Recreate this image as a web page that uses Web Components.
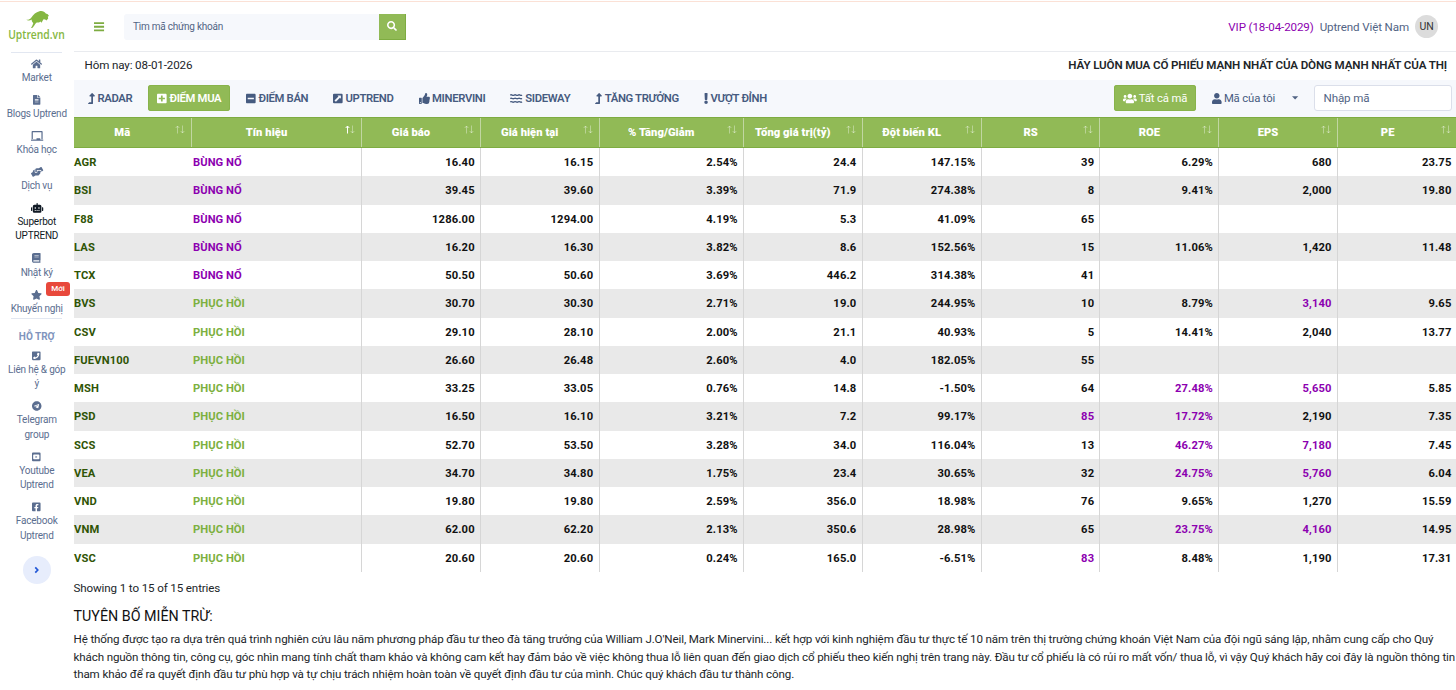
<!DOCTYPE html>
<html lang="vi">
<head>
<meta charset="utf-8">
<title>Uptrend.vn</title>
<style>
  * { box-sizing: border-box; }
  html, body { margin: 0; height: 690px; overflow: hidden; }
  body {
    font-family: Roboto, "Liberation Sans", sans-serif;
    font-size: 11.6px;
    letter-spacing: -0.125px;
    color: #212529;
    background: #fff;
    --green: #91ba56;
    --green-dark: #7eac41;
    --muted: #526484;
    --purple: #8c00b0;
  }
</style>
</head>
<body>
<app-shell></app-shell>

<script>
const icons = {
  search: [512, 'M505 442.7L405.3 343c-4.5-4.5-10.6-7-17-7H372c27.6-35.3 44-79.7 44-128C416 93.1 322.9 0 208 0S0 93.1 0 208s93.1 208 208 208c48.3 0 92.7-16.4 128-44v16.3c0 6.4 2.5 12.5 7 17l99.7 99.7c9.4 9.4 24.6 9.4 33.9 0l28.3-28.3c9.4-9.4 9.4-24.6.1-34zM208 336c-70.7 0-128-57.2-128-128 0-70.7 57.2-128 128-128 70.7 0 128 57.2 128 128 0 70.7-57.2 128-128 128z'],
  home: [576, 'M280.37 148.26L96 300.11V464a16 16 0 0 0 16 16l112.06-.29a16 16 0 0 0 15.92-16V368a16 16 0 0 1 16-16h64a16 16 0 0 1 16 16v95.64a16 16 0 0 0 16 16.05L464 480a16 16 0 0 0 16-16V300L295.67 148.26a12.19 12.19 0 0 0-15.3 0zM571.6 251.47L488 182.56V44.05a12 12 0 0 0-12-12h-56a12 12 0 0 0-12 12v72.61L318.47 43a48 48 0 0 0-61 0L4.34 251.47a12 12 0 0 0-1.6 16.9l25.5 31A12 12 0 0 0 45.15 301l235.22-193.74a12.19 12.19 0 0 1 15.3 0L530.9 301a12 12 0 0 0 16.9-1.6l25.5-31a12 12 0 0 0-1.7-16.93z'],
  file: [384, 'M224 136V0H24C10.7 0 0 10.7 0 24v464c0 13.3 10.7 24 24 24h336c13.3 0 24-10.7 24-24V160H248c-13.2 0-24-10.8-24-24zm64 236c0 6.6-5.4 12-12 12H108c-6.6 0-12-5.4-12-12v-8c0-6.6 5.4-12 12-12h168c6.6 0 12 5.4 12 12v8zm0-64c0 6.6-5.4 12-12 12H108c-6.6 0-12-5.4-12-12v-8c0-6.6 5.4-12 12-12h168c6.6 0 12 5.4 12 12v8zm0-72v8c0 6.6-5.4 12-12 12H108c-6.6 0-12-5.4-12-12v-8c0-6.6 5.4-12 12-12h168c6.6 0 12 5.4 12 12zm96-114.1v6.1H256V0h6.1c6.4 0 12.5 2.5 17 7l97.9 98c4.5 4.5 7 10.6 7 16.9z'],
  board: [640, 'M96 64h448v352h64V40c0-22.06-17.94-40-40-40H72C49.94 0 32 17.94 32 40v376h64V64zm528 384H480v-64H288v64H16c-8.84 0-16 7.16-16 16v32c0 8.84 7.16 16 16 16h608c8.84 0 16-7.16 16-16v-32c0-8.84-7.16-16-16-16z'],
  hands: [640, 'M488 192H336v56c0 39.7-32.3 72-72 72s-72-32.3-72-72V126.4l-64.9 39C107.8 176.9 96 197.8 96 220.2v47.3l-80 46.2C.7 322.5-4.6 342.1 4.3 357.4l80 138.6c8.8 15.3 28.4 20.5 43.7 11.7L231.4 448H368c35.3 0 64-28.7 64-64h16c17.7 0 32-14.3 32-32v-64h8c13.3 0 24-10.7 24-24v-48c0-13.3-10.7-24-24-24zm147.7-37.4L555.7 16C546.9.7 527.3-4.5 512 4.3L408.6 64H306.4c-12 0-23.7 3.4-33.9 9.7L239 94.6c-9.4 5.8-15 16.1-15 27.1V248c0 22.1 17.9 40 40 40s40-17.9 40-40v-88h184c30.9 0 56 25.1 56 56v28.5l80-46.2c15.3-8.9 20.5-28.4 11.7-43.7z'],
  robot: [640, 'M32 224H64V416H32A32 32 0 0 1 0 384V256A32 32 0 0 1 32 224Zm512-48V448a64 64 0 0 1-64 64H160a64 64 0 0 1-64-64V176a80 80 0 0 1 80-80H288V32a32 32 0 0 1 64 0V96H464A80 80 0 0 1 544 176ZM264 256a40 40 0 1 0-40 40A40 40 0 0 0 264 256Zm-8 128H192v32h64Zm96 0H288v32h64ZM456 256a40 40 0 1 0-40 40A40 40 0 0 0 456 256Zm-8 128H384v32h64ZM640 256V384a32 32 0 0 1-32 32H576V224h32A32 32 0 0 1 640 256Z'],
  book: [448, 'M448 360V24c0-13.3-10.7-24-24-24H96C43 0 0 43 0 96v320c0 53 43 96 96 96h328c13.3 0 24-10.7 24-24v-16c0-7.5-3.5-14.3-8.9-18.7-4.2-15.4-4.2-59.3 0-74.7 5.4-4.3 8.9-11.1 8.9-18.6zM128 134c0-3.3 2.7-6 6-6h212c3.3 0 6 2.7 6 6v20c0 3.3-2.7 6-6 6H134c-3.3 0-6-2.7-6-6v-20zm0 64c0-3.3 2.7-6 6-6h212c3.3 0 6 2.7 6 6v20c0 3.3-2.7 6-6 6H134c-3.3 0-6-2.7-6-6v-20zm253.4 250H96c-17.7 0-32-14.3-32-32 0-17.6 14.4-32 32-32h285.4c-1.9 17.1-1.9 46.9 0 64z'],
  star: [576, 'M259.3 17.8L194 150.2 47.9 171.5c-26.2 3.8-36.7 36.1-17.7 54.6l105.7 103-25 145.5c-4.5 26.3 23.2 46 46.4 33.7L288 439.6l130.7 68.7c23.2 12.2 50.9-7.4 46.4-33.7l-25-145.5 105.7-103c19-18.5 8.5-50.8-17.7-54.6L382 150.2 316.7 17.8c-11.7-23.6-45.6-23.9-57.4 0z'],
  phone: [448, 'M400 32H48C21.5 32 0 53.5 0 80v352c0 26.5 21.5 48 48 48h352c26.5 0 48-21.5 48-48V80c0-26.5-21.5-48-48-48zM94 416c-7 0-13.3-4.8-15-11.6l-15-65c-1.8-7.4 2.1-14.9 9-18l70-30c6.3-2.7 13.9-.9 18.2 4.5l31 37.9c48.9-22.9 88-62.5 110.7-110.7l-37.8-31c-5.3-4.3-7.2-11.9-4.5-18.2l30-70c3.1-7 10.6-10.7 18-9l65 15C379.2 112.7 384 118.9 384 126c0 160.1-129.9 290-290 290z'],
  telegram: [496, 'M248 8C111 8 0 119 0 256s111 248 248 248 248-111 248-248S385 8 248 8zm121.8 169.9l-40.7 191.8c-3 13.6-11.1 16.9-22.4 10.5l-62-45.7-29.9 28.8c-3.3 3.3-6.1 6.1-12.5 6.1l4.4-63.1 114.9-103.8c5-4.4-1.1-6.9-7.7-2.5l-142 89.4-61.2-19.1c-13.3-4.2-13.6-13.3 2.8-19.7l239.1-92.2c11.1-4 20.8 2.7 17.2 19.5z'],
  youtube: [448, 'M48 32H400a48 48 0 0 1 48 48V432a48 48 0 0 1-48 48H48a48 48 0 0 1-48-48V80a48 48 0 0 1 48-48ZM104 128Q62 128 62 170V342Q62 384 104 384H344Q386 384 386 342V170Q386 128 344 128ZM186 202L282 256 186 310Z'],
  facebook: [448, 'M400 32H48A48 48 0 0 0 0 80v352a48 48 0 0 0 48 48h137.25V327.69h-63V256h63v-54.64c0-62.15 37-96.48 93.67-96.48 27.14 0 55.52 4.84 55.52 4.84v61h-31.27c-30.81 0-40.42 19.12-40.42 38.73V256h68.78l-11 71.69h-57.78V480H400a48 48 0 0 0 48-48V80a48 48 0 0 0-48-48z'],
  level: [320, 'M313.55 119.67L209.59 7.67c-9.49-10.21-25.68-10.23-35.18 0L70.44 119.67C56.23 134.97 67.06 160 88.02 160H152v272H68.02a12 12 0 0 0-8.48 3.52l-56 56C-4.02 499.07 1.33 512 12.02 512H208c13.26 0 24-10.75 24-24V160h63.97c20.88 0 31.85-24.97 17.58-40.33z'],
  plus: [448, 'M400 32H48C21.5 32 0 53.5 0 80v352c0 26.5 21.5 48 48 48h352c26.5 0 48-21.5 48-48V80c0-26.5-21.5-48-48-48zm-32 252c0 6.6-5.4 12-12 12h-92v92c0 6.6-5.4 12-12 12h-56c-6.6 0-12-5.4-12-12v-92H92c-6.6 0-12-5.4-12-12v-56c0-6.6 5.4-12 12-12h92v-92c0-6.6 5.4-12 12-12h56c6.6 0 12 5.4 12 12v92h92c6.6 0 12 5.4 12 12v56z'],
  minus: [448, 'M400 32H48C21.5 32 0 53.5 0 80v352c0 26.5 21.5 48 48 48h352c26.5 0 48-21.5 48-48V80c0-26.5-21.5-48-48-48zM92 296c-6.6 0-12-5.4-12-12v-56c0-6.6 5.4-12 12-12h264c6.6 0 12 5.4 12 12v56c0 6.6-5.4 12-12 12H92z'],
  trend: [448, 'M400 32H48A48 48 0 0 0 0 80v352a48 48 0 0 0 48 48h352a48 48 0 0 0 48-48V80a48 48 0 0 0-48-48ZM208 112H352Q368 112 368 128V272L322 226 136 412 68 344 254 158Z'],
  thumb: [512, 'M104 224H24c-13.255 0-24 10.745-24 24v240c0 13.255 10.745 24 24 24h80c13.255 0 24-10.745 24-24V248c0-13.255-10.745-24-24-24zM64 472c-13.255 0-24-10.745-24-24s10.745-24 24-24 24 10.745 24 24-10.745 24-24 24zM384 81.452c0 42.416-25.97 66.208-33.277 94.548h101.723c33.397 0 59.397 27.746 59.553 58.098.084 17.938-7.546 37.249-19.439 49.197l-.11.11c9.836 23.337 8.237 56.037-9.308 79.469 8.681 25.895-.069 57.704-16.382 74.757 4.298 17.598 2.244 32.575-6.148 44.632C440.202 511.587 389.616 512 346.839 512l-2.845-.001c-48.287-.017-87.806-17.598-119.56-31.725-15.957-7.099-36.821-15.887-52.651-16.178-6.54-.12-11.783-5.457-11.783-11.998v-213.77c0-3.2 1.282-6.271 3.558-8.521 39.614-39.144 56.648-80.587 89.117-113.111 14.804-14.832 20.188-37.236 25.393-58.902C282.515 39.293 291.817 0 312 0c24 0 72 8 72 81.452z'],
  exclaim: [192, 'M176 432c0 44.112-35.888 80-80 80s-80-35.888-80-80 35.888-80 80-80 80 35.888 80 80zM25.26 25.199l13.6 272C39.499 309.972 50.041 320 62.83 320h66.34c12.789 0 23.331-10.028 23.97-22.801l13.6-272C167.425 11.49 156.496 0 142.77 0H49.23C35.504 0 24.575 11.49 25.26 25.199z'],
  user: [448, 'M224 256c70.7 0 128-57.3 128-128S294.7 0 224 0 96 57.3 96 128s57.3 128 128 128zm89.6 32h-16.7c-22.2 10.2-46.9 16-72.9 16s-50.6-5.8-72.9-16h-16.7C60.2 288 0 348.2 0 422.4V464c0 26.5 21.5 48 48 48h352c26.5 0 48-21.5 48-48v-41.6c0-74.2-60.2-134.4-134.4-134.4z'],
  users: [640, 'M96 224c35.3 0 64-28.7 64-64s-28.7-64-64-64-64 28.7-64 64 28.7 64 64 64zm448 0c35.3 0 64-28.7 64-64s-28.7-64-64-64-64 28.7-64 64 28.7 64 64 64zm32 32h-64c-17.6 0-33.5 7.1-45.1 18.6 40.3 22.1 68.9 62 75.1 109.4h66c17.7 0 32-14.3 32-32v-32c0-35.3-28.7-64-64-64zm-256 0c61.9 0 112-50.1 112-112S381.9 32 320 32 208 82.1 208 144s50.1 112 112 112zm76.8 32h-8.3c-20.8 10-43.9 16-68.5 16s-47.6-6-68.5-16h-8.3C179.6 288 128 339.6 128 403.2V432c0 26.5 21.5 48 48 48h288c26.5 0 48-21.5 48-48v-28.8c0-63.6-51.6-115.2-115.2-115.2zm-223.7-13.4C161.5 263.1 145.6 256 128 256H64c-35.3 0-64 28.7-64 64v32c0 17.7 14.3 32 32 32h65.9c6.3-47.4 34.9-87.3 75.2-109.4z'],
  // three stacked ripples
  water: [576, 'M10 96Q56 70 102 96T194 96T286 96T378 96T470 96T562 96M10 256Q56 230 102 256T194 256T286 256T378 256T470 256T562 256M10 416Q56 390 102 416T194 416T286 416T378 416T470 416T562 416', 62],
  bars: [448, 'M0 92H448M0 256H448M0 420H448', 80],
  chevron: [320, 'M80 90L240 256 80 422', 110],
  caret: [320, 'M0 160H320L160 330Z']
};

class FaIcon extends HTMLElement {
  constructor() {
    super();
    this.attachShadow({ mode: 'open' });
  }
  connectedCallback() {
    const [w, d, stroke] = icons[this.getAttribute('name')];
    const size = Number(this.getAttribute('size') || 11);
    const paint = stroke
      ? `fill="none" stroke="currentColor" stroke-width="${stroke}"`
      : 'fill="currentColor" fill-rule="evenodd"';
    this.shadowRoot.innerHTML = `
      <style>
        :host { display: inline-flex; flex: none; }
        svg { display: block; overflow: visible; }
      </style>
      <svg width="${size * w / 512}" height="${size}" viewBox="0 0 ${w} 512"><path ${paint} d="${d}"/></svg>
    `;
  }
}

class BrandLogo extends HTMLElement {
  constructor() {
    super();
    this.attachShadow({ mode: 'open' });
    this.shadowRoot.innerHTML = `
      <style>
        :host { display: flex; box-sizing: border-box; flex-direction: column; align-items: center; height: 52px; padding-top: 10px; color: #85b742; }
        svg { display: block; margin-left: 2px; }
        span {
          font: 600 12.6px/15px "Open Sans", sans-serif;
          letter-spacing: 0;
          margin: -1px 1px 0 0;
          transform: scaleX(0.82);
          white-space: nowrap;
        }
      </style>
      <svg width="24" height="18" viewBox="0 0 24 18" fill="currentColor">
        <path d="M0 9.6C1.8 10.2 3.6 9.6 5.2 7.8C7.4 4.4 10 2.3 13.4 1.3C16.4 .6 18.6 1.7 19.8 3.4L21.8 4.2L23 6L21.8 6.4L22.2 8.6L20.4 10.4L19.200 9.5L17.6 9.2L16.6 10.8L15.6 12.8L14.5 11.6L13 12.4L10.7 12.4L9.4 13.800L8.3 15.6L6.600 17.8L4.9 18L6.2 15.900L7.300 13.200L6 11.500L5.5 9.6C4 11 1.600 10.900 0 9.6Z"/>
      </svg>
      <span>Uptrend.vn</span>
    `;
  }
}

class SideItem extends HTMLElement {
  constructor() {
    super();
    this.attachShadow({ mode: 'open' });
  }
  connectedCallback() {
    const badge = this.getAttribute('badge');
    this.shadowRoot.innerHTML = `
      <style>
        :host {
          display: block;
          position: relative;
          padding-bottom: 7.3px;
          text-align: center;
          font-size: 10px;
          letter-spacing: -0.2px;
          line-height: 14.4px;
          color: #5b6e90;
          white-space: nowrap;
        }
        :host([active]) { color: #101924; }
        .icon { display: flex; height: 14.4px; align-items: center; justify-content: center; }
        .badge {
          position: absolute;
          left: 46px;
          top: -5px;
          width: 24px;
          height: 14px;
          border-radius: 3px;
          background: #e8483b;
          color: #fff;
          font-size: 8px;
          font-weight: 500;
          letter-spacing: 0;
          line-height: 14px;
        }
      </style>
      <div class="icon"><fa-icon name="${this.getAttribute('icon')}" size="9.8"></fa-icon></div>
      <slot></slot>
      ${badge ? `<span class="badge">${badge}</span>` : ''}
    `;
  }
}

class SideBar extends HTMLElement {
  constructor() {
    super();
    this.attachShadow({ mode: 'open' });
    this.shadowRoot.innerHTML = `
      <style>
        :host { display: block; width: 73.5px; flex: none; }
        hr { margin: 0 12px 0 11px; border: 0; height: 1px; background: #e2e7f1; }
        .first { margin-bottom: 3.3px; }
        .second { margin-top: -5.5px; }
        h6 { margin: 11.2px 0 4.4px; font-size: 10px; line-height: 14px; font-weight: 700; text-align: center; color: #8094bd; letter-spacing: 0; }
        .toggle {
          display: flex;
          width: 28px;
          height: 28px;
          margin: 6px auto 0;
          align-items: center;
          justify-content: center;
          border-radius: 50%;
          background: #e7edfc;
          color: #2257d6;
        }
      </style>
      <brand-logo></brand-logo>
      <hr class="first">
      <side-item icon="home">Market</side-item>
      <side-item icon="file">Blogs Uptrend</side-item>
      <side-item icon="board">Khóa học</side-item>
      <side-item icon="hands">Dịch vụ</side-item>
      <side-item icon="robot" active>Superbot<br>UPTREND</side-item>
      <side-item icon="book">Nhật ký</side-item>
      <side-item icon="star" badge="Mới">Khuyến nghị</side-item>
      <hr class="second">
      <h6>HỖ TRỢ</h6>
      <side-item icon="phone">Liên hệ &amp; góp<br>ý</side-item>
      <side-item icon="telegram">Telegram<br>group</side-item>
      <side-item icon="youtube">Youtube<br>Uptrend</side-item>
      <side-item icon="facebook">Facebook<br>Uptrend</side-item>
      <div class="toggle"><fa-icon name="chevron" size="8"></fa-icon></div>
    `;
  }
}

class TopBar extends HTMLElement {
  constructor() {
    super();
    this.attachShadow({ mode: 'open' });
    this.shadowRoot.innerHTML = `
      <style>
        * { box-sizing: border-box; }
        :host { display: flex; box-sizing: border-box; height: 52px; padding: 2px 18px 0 20.5px; align-items: center; border-bottom: 1px solid #e9ebef; color: var(--muted); }
        .menu { color: #7eac41; margin-right: 20px; }
        .search { display: flex; width: 282px; height: 26px; }
        .field { flex: 1; padding-left: 9px; line-height: 25px; font-size: 10px; letter-spacing: -0.23px; background: #f6f8fc; border-radius: 3px 0 0 3px; }
        .go { display: flex; width: 27px; align-items: center; justify-content: center; background: var(--green); color: #fff; border: 1px solid var(--green-dark); border-width: 0 1px 1px 0; }
        .user { display: flex; align-items: center; margin-left: auto; line-height: 22px; }
        .vip { color: var(--purple); margin-right: 6px; }
        .avatar { width: 23px; height: 23px; margin-left: 6px; border-radius: 50%; background: #dcdcdc; color: #333; font-size: 10.5px; line-height: 23px; text-align: center; }
      </style>
      <fa-icon class="menu" name="bars" size="11.5"></fa-icon>
      <div class="search">
        <div class="field">Tìm mã chứng khoán</div>
        <div class="go"><fa-icon name="search" size="10"></fa-icon></div>
      </div>
      <div class="user">
        <span class="vip">VIP (18-04-2029)</span>
        <span class="name">Uptrend Việt Nam</span>
        <span class="avatar">UN</span>
      </div>
    `;
  }
}

class TabButton extends HTMLElement {
  constructor() {
    super();
    this.attachShadow({ mode: 'open' });
  }
  connectedCallback() {
    this.shadowRoot.innerHTML = `
      <style>
        :host {
          display: flex;
          box-sizing: border-box;
          flex: none;
          height: 26px;
          padding: 0 9px;
          gap: 2.5px;
          align-items: center;
          border-radius: 3px;
          font-weight: 600;
          font-size: 11.3px;
          letter-spacing: -0.34px;
          color: #465b80;
          white-space: nowrap;
        }
        :host([active]) { background: var(--green); color: #fff; box-shadow: inset 0 0 0 1px #88b34b; }
      </style>
      <fa-icon name="${this.getAttribute('icon')}" size="11"></fa-icon><slot></slot>
    `;
  }
}

class FilterBar extends HTMLElement {
  constructor() {
    super();
    this.attachShadow({ mode: 'open' });
    this.shadowRoot.innerHTML = `
      <style>
        * { box-sizing: border-box; }
        :host { display: flex; box-sizing: border-box; height: 37px; padding: 0 4px 1px 5.5px; align-items: center; background: #f6f8fc; }
        tab-button { margin-right: 7px; }
        .right { display: flex; align-items: center; margin-left: auto; color: var(--muted); }
        .right tab-button { font-weight: 400; letter-spacing: -0.14px; margin: 0; }
        .right .mine { width: 89px; margin-left: 6.5px; }
        .caret { margin-right: 16px; }
        .input { width: 138px; height: 26px; padding-left: 8.5px; border: 1px solid #dbdfea; border-radius: 3px; background: #fff; line-height: 25px; }
      </style>
      <tab-button icon="level">RADAR</tab-button>
      <tab-button icon="plus" active>ĐIỂM MUA</tab-button>
      <tab-button icon="minus">ĐIỂM BÁN</tab-button>
      <tab-button icon="trend">UPTREND</tab-button>
      <tab-button icon="thumb">MINERVINI</tab-button>
      <tab-button icon="water">SIDEWAY</tab-button>
      <tab-button icon="level">TĂNG TRƯỞNG</tab-button>
      <tab-button icon="exclaim">VƯỢT ĐỈNH</tab-button>
      <div class="right">
        <tab-button icon="users" active>Tất cả mã</tab-button>
        <tab-button class="mine" icon="user">Mã của tôi</tab-button>
        <fa-icon class="caret" name="caret" size="10"></fa-icon>
        <div class="input">Nhập mã</div>
      </div>
    `;
  }
}

const columns = ['Mã', 'Tín hiệu', 'Giá báo', 'Giá hiện tại', '% Tăng/Giảm', 'Tổng giá trị(tỷ)', 'Đột biến KL', 'RS', 'ROE', 'EPS', 'PE'];

// a trailing * marks a highlighted value
const rows = [
  ['AGR', 'BÙNG NỔ', '16.40', '16.15', '2.54%', '24.4', '147.15%', '39', '6.29%', '680', '23.75'],
  ['BSI', 'BÙNG NỔ', '39.45', '39.60', '3.39%', '71.9', '274.38%', '8', '9.41%', '2,000', '19.80'],
  ['F88', 'BÙNG NỔ', '1286.00', '1294.00', '4.19%', '5.3', '41.09%', '65', '', '', ''],
  ['LAS', 'BÙNG NỔ', '16.20', '16.30', '3.82%', '8.6', '152.56%', '15', '11.06%', '1,420', '11.48'],
  ['TCX', 'BÙNG NỔ', '50.50', '50.60', '3.69%', '446.2', '314.38%', '41', '', '', ''],
  ['BVS', 'PHỤC HỒI', '30.70', '30.30', '2.71%', '19.0', '244.95%', '10', '8.79%', '3,140*', '9.65'],
  ['CSV', 'PHỤC HỒI', '29.10', '28.10', '2.00%', '21.1', '40.93%', '5', '14.41%', '2,040', '13.77'],
  ['FUEVN100', 'PHỤC HỒI', '26.60', '26.48', '2.60%', '4.0', '182.05%', '55', '', '', ''],
  ['MSH', 'PHỤC HỒI', '33.25', '33.05', '0.76%', '14.8', '-1.50%', '64', '27.48%*', '5,650*', '5.85'],
  ['PSD', 'PHỤC HỒI', '16.50', '16.10', '3.21%', '7.2', '99.17%', '85*', '17.72%*', '2,190', '7.35'],
  ['SCS', 'PHỤC HỒI', '52.70', '53.50', '3.28%', '34.0', '116.04%', '13', '46.27%*', '7,180*', '7.45'],
  ['VEA', 'PHỤC HỒI', '34.70', '34.80', '1.75%', '23.4', '30.65%', '32', '24.75%*', '5,760*', '6.04'],
  ['VND', 'PHỤC HỒI', '19.80', '19.80', '2.59%', '356.0', '18.98%', '76', '9.65%', '1,270', '15.59'],
  ['VNM', 'PHỤC HỒI', '62.00', '62.20', '2.13%', '350.6', '28.98%', '65', '23.75%*', '4,160*', '14.95'],
  ['VSC', 'PHỤC HỒI', '20.60', '20.60', '0.24%', '165.0', '-6.51%', '83*', '8.48%', '1,190', '17.31']
];

class StockTable extends HTMLElement {
  constructor() {
    super();
    this.attachShadow({ mode: 'open' });
    const head = columns.map((name, i) => `
      <div class="th${i === 1 ? ' asc' : ''}"><b>${name}</b><svg width="10" height="9" viewBox="0 0 10 9" fill="none" stroke="#fff"><path class="up" d="M2.5 8.5V1M.7 3L2.5 1 4.3 3"/><path class="down" d="M7.5 .5V8M5.7 6L7.5 8 9.3 6"/></svg></div>`).join('');
    const body = rows.map(row => `<div class="row">${row.map((value, i) => {
      let cls = '';
      if (i === 0) cls = 'code';
      else if (i === 1) cls = value === 'BÙNG NỔ' ? 'signal hot' : 'signal';
      else if (value.endsWith('*')) cls = 'hot';
      return `<div class="td ${cls}">${value.replace('*', '')}</div>`;
    }).join('')}</div>`).join('');
    this.shadowRoot.innerHTML = `
      <style>
        * { box-sizing: border-box; }
        :host { display: block; width: 1383px; font-weight: 700; font-size: 11.2px; letter-spacing: 0.13px; }
        .head, .row { display: grid; grid-template-columns: 118.5px 170px 119px 118.5px 144.5px 118.7px 119px 118.8px 118.8px 118.6px 118.6px; }
        .head { height: 31px; background: var(--green); border-top: 1px solid var(--green-dark); border-bottom: 1px solid var(--green-dark); color: #fff; }
        .th { display: flex; align-items: center; padding-right: 6px; border-right: 1px solid #c1d6a2; letter-spacing: 0.05px; }
        .th b { flex: 1; text-align: center; padding-right: 4px; white-space: nowrap; }
        .th svg { margin-top: -6px; }
        .th path { opacity: 0.36; }
        .th.asc .up { opacity: 1; }
        .row { height: 28.27px; line-height: 29px; color: #111; }
        .rows .row:nth-child(even) { background: #e9e9e9; }
        .td { height: 28.27px; text-align: right; padding-right: 5.3px; border-right: 1px solid #d6d6d6; }
        .th:last-child, .td:last-child { border-right: 0; padding-right: 5px; }
        .code { text-align: left; color: #2f5405; border-right: 0; padding-left: 0.5px; }
        .signal { text-align: left; padding-left: 1px; letter-spacing: 0.06px; color: #7cb040; }
        .hot { color: var(--purple); }
      </style>
      <div class="head">${head}</div>
      <div class="rows">${body}</div>
    `;
  }
}

class PageNotes extends HTMLElement {
  constructor() {
    super();
    this.attachShadow({ mode: 'open' });
    this.shadowRoot.innerHTML = `
      <style>
        :host { display: block; white-space: nowrap; }
        .info { margin-top: 8.5px; line-height: 17px; }
        h5 { margin: 10px 0 6px; font-size: 14.3px; line-height: 18px; font-weight: 400; letter-spacing: 0; color: #111; }
        p { margin: 0; line-height: 17.2px; }
      </style>
      <div class="info">Showing 1 to 15 of 15 entries</div>
      <h5>TUYÊN BỐ MIỄN TRỪ:</h5>
      <p>Hệ thống được tạo ra dựa trên quá trình nghiên cứu lâu năm phương pháp đầu tư theo đà tăng trưởng của William J.O'Neil, Mark Minervini... kết hợp với kinh nghiệm đầu tư thực tế 10 năm trên thị trường chứng khoán Việt Nam của đội ngũ sáng lập, nhằm cung cấp cho Quý<br>khách nguồn thông tin, công cụ, góc nhìn mang tính chất tham khảo và không cam kết hay đảm bảo về việc không thua lỗ liên quan đến giao dịch cổ phiếu theo kiến nghị trên trang này. Đầu tư cổ phiếu là có rủi ro mất vốn/ thua lỗ, vì vậy Quý khách hãy coi đây là nguồn thông tin<br>tham khảo để ra quyết định đầu tư phù hợp và tự chịu trách nhiệm hoàn toàn về quyết định đầu tư của mình. Chúc quý khách đầu tư thành công.</p>
    `;
  }
}

class AppShell extends HTMLElement {
  constructor() {
    super();
    this.attachShadow({ mode: 'open' });
    this.shadowRoot.innerHTML = `
      <style>
        * { box-sizing: border-box; }
        :host { display: flex; width: 1456px; height: 690px; overflow: hidden; background: linear-gradient(#fbe1d6, #fbe1d6) 0 1px / 100% 1px no-repeat; }
        main { flex: 1; min-width: 0; }
        .ticker { display: flex; justify-content: space-between; height: 28px; padding: 0 9px 0 11px; line-height: 26px; }
        .ticker b { font-weight: 600; letter-spacing: -0.13px; }
      </style>
      <side-bar></side-bar>
      <main>
        <top-bar></top-bar>
        <div class="ticker"><span>Hôm nay: 08-01-2026</span><b>HÃY LUÔN MUA CỔ PHIẾU MẠNH NHẤT CỦA DÒNG MẠNH NHẤT CỦA THỊ</b></div>
        <filter-bar></filter-bar>
        <stock-table></stock-table>
        <page-notes></page-notes>
      </main>
    `;
  }
}

customElements.define('fa-icon', FaIcon);
customElements.define('brand-logo', BrandLogo);
customElements.define('side-item', SideItem);
customElements.define('side-bar', SideBar);
customElements.define('top-bar', TopBar);
customElements.define('tab-button', TabButton);
customElements.define('filter-bar', FilterBar);
customElements.define('stock-table', StockTable);
customElements.define('page-notes', PageNotes);
customElements.define('app-shell', AppShell);
</script>
</body>
</html>
